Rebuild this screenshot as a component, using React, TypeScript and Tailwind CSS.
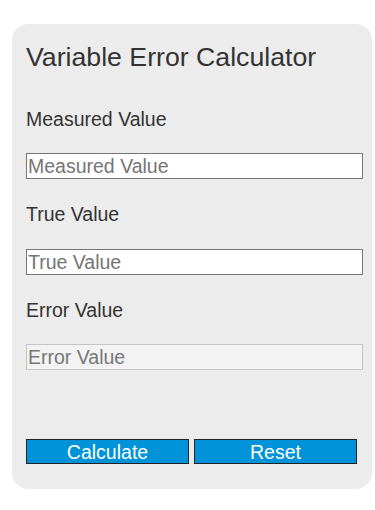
import React from "react";

const font = { fontFamily: '"Liberation Sans", Arial, sans-serif' };

export default function App() {
  return (
    <div className="w-[375px] h-[510px] bg-white pt-[24px] pl-[12px]" style={font}>
      <div className="w-[360px] h-[465px] rounded-[16px] bg-[#ececec] pt-[16px] px-[14px] flex flex-col text-[#333]">
        <h1 className="text-[26.7px] leading-[34px] font-normal">Variable Error Calculator</h1>

        <label className="mt-[34px] text-[19.5px] leading-[22px]">Measured Value</label>
        <input
          className="mt-[23px] w-[337px] h-[26px] border border-[#767676] bg-white px-[1px] text-[19.5px] leading-[22px] placeholder:text-[#757575] outline-none"
          placeholder="Measured Value"
        />

        <label className="mt-[24px] text-[19.5px] leading-[22px]">True Value</label>
        <input
          className="mt-[24px] w-[337px] h-[26px] border border-[#767676] bg-white px-[1px] text-[19.5px] leading-[22px] placeholder:text-[#757575] outline-none"
          placeholder="True Value"
        />

        <label className="mt-[24px] text-[19.5px] leading-[22px]">Error Value</label>
        <input
          readOnly
          className="mt-[23px] w-[337px] h-[26px] border border-[#c4c4c4] bg-[#f3f3f3] px-[1px] text-[19.5px] leading-[22px] placeholder:text-[#777] outline-none"
          placeholder="Error Value"
        />

        <div className="mt-[69px] flex gap-[5px]">
          <button className="w-[163px] h-[25px] bg-[#0093d9] border border-[#222] text-white text-[19.5px] leading-[22px]">
            Calculate
          </button>
          <button className="w-[163px] h-[25px] bg-[#0093d9] border border-[#222] text-white text-[19.5px] leading-[22px]">
            Reset
          </button>
        </div>
      </div>
    </div>
  );
}
